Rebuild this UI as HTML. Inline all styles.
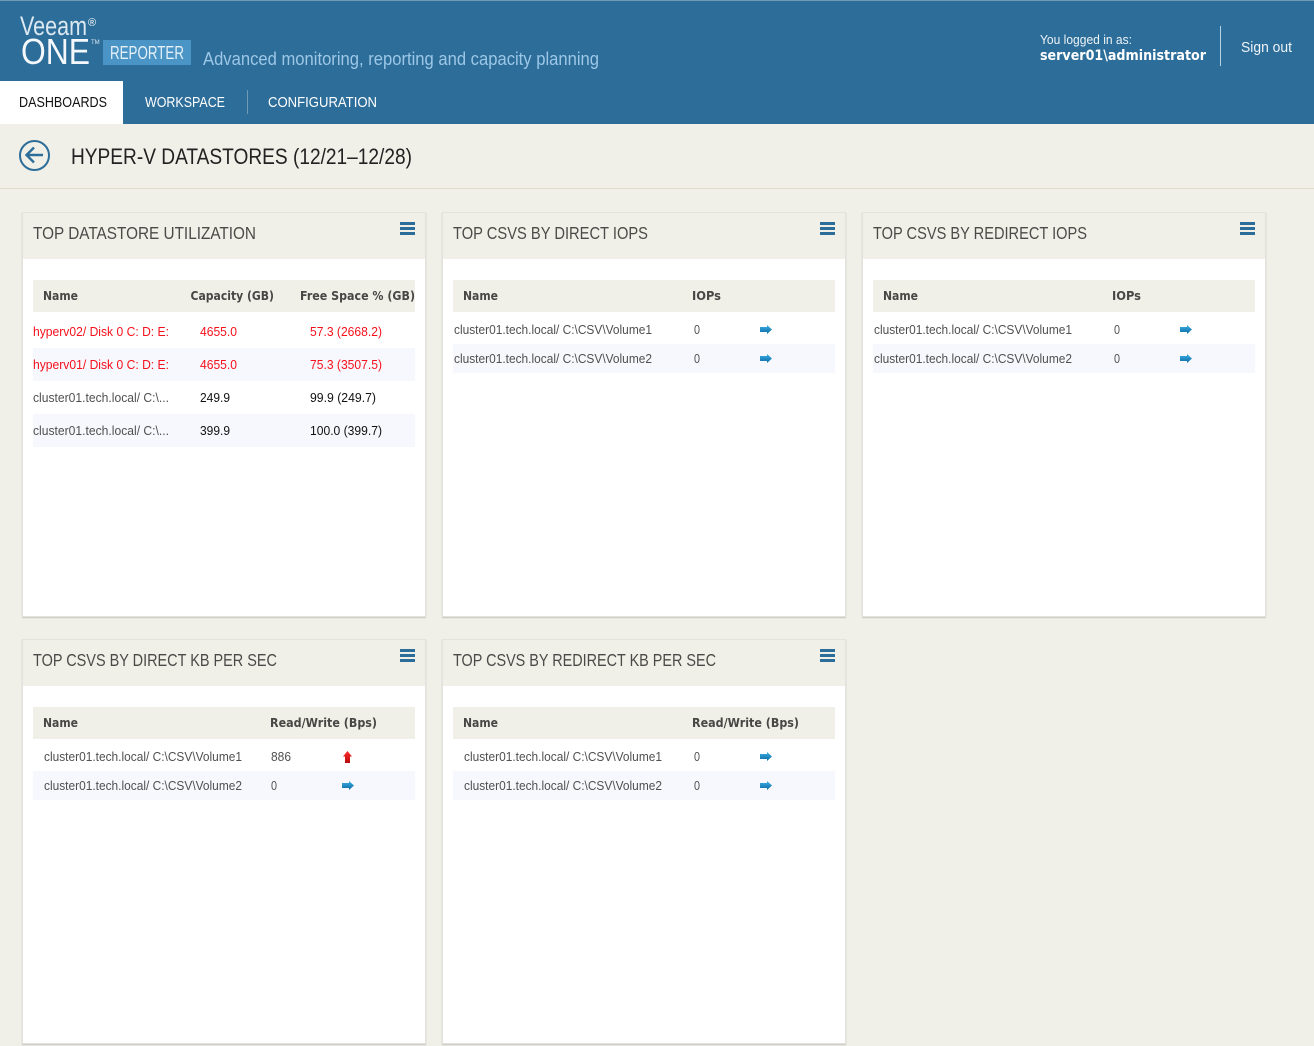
<!DOCTYPE html>
<html lang="en">
<head>
<meta charset="utf-8">
<title>Hyper-V Datastores</title>
<style>
html,body{margin:0;padding:0;background:#f1f0e8;width:1314px;height:1046px;overflow:hidden}
svg{display:block;position:absolute;left:0;top:0}
text{font-family:"Liberation Sans",Arial,sans-serif;white-space:pre}
.t{font-size:13px;fill:#505050}
.k{font-size:13px;fill:#111}
.r{font-size:13px;fill:#f5101c}
.h{font-size:12px;font-weight:bold;fill:#474745;font-family:"DejaVu Sans",sans-serif}
.p{font-size:17.5px;fill:#4a4a48}
.n{font-size:14.5px;fill:#fff}
</style>
</head>
<body>
<svg width="1314" height="1046" viewBox="0 0 1314 1046" xmlns="http://www.w3.org/2000/svg">
<defs>
<linearGradient id="bg" x1="0" y1="0" x2="0" y2="1"><stop offset="0" stop-color="#3db0e6"/><stop offset="1" stop-color="#0b6aa2"/></linearGradient>
<linearGradient id="rg" x1="0" y1="0" x2="0" y2="1"><stop offset="0" stop-color="#ff2a2a"/><stop offset="1" stop-color="#b80c0c"/></linearGradient>
<g id="ba"><path d="M0 2H7V0L12 4.500 7 9V7H0Z" fill="url(#bg)"/></g>
<g id="ra"><path d="M4.500 0L9 5.500H7V12H2V5.500H0Z" fill="url(#rg)"/></g>
<g id="m" fill="#2d6d99"><rect width="15" height="3"/><rect y="5" width="15" height="3"/><rect y="10" width="15" height="3"/></g>
<filter id="s" x="-2%" y="-2%" width="104%" height="104%"><feDropShadow dx="0" dy="1" stdDeviation=".6" flood-color="#000" flood-opacity=".18"/></filter>
</defs>

<rect width="1314" height="1046" fill="#f1f0e8"/>
<!-- header -->
<rect width="1314" height="124" fill="#2d6d99"/>
<rect width="1314" height="1" fill="#6f9bb9"/>
<text x="20" y="35" font-size="27" fill="#dce9f2" textLength="67" lengthAdjust="spacingAndGlyphs">Veeam</text>
<text x="88" y="26" font-size="11" fill="#fff">®</text>
<text x="21" y="64" font-size="36" fill="#f4f8fb" textLength="69" lengthAdjust="spacingAndGlyphs">ONE</text>
<text x="91" y="44" font-size="6" fill="#dbe8f1">TM</text>
<rect x="103" y="40" width="88" height="25" fill="#4a94c6"/>
<text x="110" y="59" font-size="18" fill="#e6f1f8" textLength="74" lengthAdjust="spacingAndGlyphs">REPORTER</text>
<text x="203" y="65" font-size="18.500" fill="#9cc7e6" textLength="396" lengthAdjust="spacingAndGlyphs">Advanced monitoring, reporting and capacity planning</text>
<rect x="0" y="81" width="123" height="43" fill="#fff"/>
<text x="19" y="107" class="n" style="fill:#111" textLength="88" lengthAdjust="spacingAndGlyphs">DASHBOARDS</text>
<text x="145" y="107" class="n" textLength="80" lengthAdjust="spacingAndGlyphs">WORKSPACE</text>
<rect x="247" y="90" width="1" height="24" fill="#6f9bb9"/>
<text x="268" y="107" class="n" textLength="109" lengthAdjust="spacingAndGlyphs">CONFIGURATION</text>
<text x="1040" y="44" font-size="13" fill="#eef4f8" textLength="92" lengthAdjust="spacingAndGlyphs">You logged in as:</text>
<text x="1040" y="60" font-size="14" font-weight="bold" fill="#fff" style="font-family:'DejaVu Sans',sans-serif" textLength="166" lengthAdjust="spacingAndGlyphs">server01\administrator</text>
<rect x="1220" y="26" width="1" height="40" fill="#b5d3e6"/>
<text x="1241" y="52" font-size="14.500" fill="#eef4f8" textLength="51" lengthAdjust="spacingAndGlyphs">Sign out</text>

<!-- page title -->
<circle cx="34.500" cy="155.500" r="14.500" fill="none" stroke="#2d6d99" stroke-width="2"/>
<path d="M43 155H27M34 147.500L26.500 155 34 162.500" fill="none" stroke="#2d6d99" stroke-width="2.400"/>
<text x="71" y="164" font-size="22" fill="#222" textLength="341" lengthAdjust="spacingAndGlyphs">HYPER-V DATASTORES (12/21–12/28)</text>
<rect y="188" width="1314" height="1" fill="#dddccd"/>

<!-- panels -->
<g fill="#fff" stroke="#e2e2de" filter="url(#s)">
<rect x="22.500" y="212.500" width="403" height="404"/>
<rect x="442.500" y="212.500" width="403" height="404"/>
<rect x="862.500" y="212.500" width="403" height="404"/>
<rect x="22.500" y="639.500" width="403" height="404"/>
<rect x="442.500" y="639.500" width="403" height="404"/>
</g>
<g fill="#f1f0e8">
<rect x="23" y="213" width="402" height="46"/>
<rect x="443" y="213" width="402" height="46"/>
<rect x="863" y="213" width="402" height="46"/>
<rect x="23" y="640" width="402" height="46"/>
<rect x="443" y="640" width="402" height="46"/>
<rect x="33" y="280" width="382" height="32"/>
<rect x="453" y="280" width="382" height="32"/>
<rect x="873" y="280" width="382" height="32"/>
<rect x="33" y="707" width="382" height="32"/>
<rect x="453" y="707" width="382" height="32"/>
</g>
<g fill="#f7f8fd">
<rect x="33" y="348" width="382" height="33"/>
<rect x="33" y="414" width="382" height="33"/>
<rect x="453" y="344" width="382" height="29"/>
<rect x="873" y="344" width="382" height="29"/>
<rect x="33" y="771" width="382" height="29"/>
<rect x="453" y="771" width="382" height="29"/>
</g>
<use href="#m" x="400" y="222"/><use href="#m" x="820" y="222"/><use href="#m" x="1240" y="222"/>
<use href="#m" x="400" y="649"/><use href="#m" x="820" y="649"/>

<!-- titles -->
<text x="33" y="239" class="p" textLength="223" lengthAdjust="spacingAndGlyphs">TOP DATASTORE UTILIZATION</text>
<text x="453" y="239" class="p" textLength="195" lengthAdjust="spacingAndGlyphs">TOP CSVS BY DIRECT IOPS</text>
<text x="873" y="239" class="p" textLength="214" lengthAdjust="spacingAndGlyphs">TOP CSVS BY REDIRECT IOPS</text>
<text x="33" y="666" class="p" textLength="244" lengthAdjust="spacingAndGlyphs">TOP CSVS BY DIRECT KB PER SEC</text>
<text x="453" y="666" class="p" textLength="263" lengthAdjust="spacingAndGlyphs">TOP CSVS BY REDIRECT KB PER SEC</text>

<!-- panel 1 -->
<text x="43" y="300" class="h" textLength="35" lengthAdjust="spacingAndGlyphs">Name</text>
<text x="190.500" y="300" class="h" textLength="83.500" lengthAdjust="spacingAndGlyphs">Capacity (GB)</text>
<text x="300" y="300" class="h" textLength="115" lengthAdjust="spacingAndGlyphs">Free Space % (GB)</text>
<text x="33" y="336" class="r" textLength="136" lengthAdjust="spacingAndGlyphs">hyperv02/ Disk 0 C: D: E:</text>
<text x="200" y="336" class="r" textLength="37" lengthAdjust="spacingAndGlyphs">4655.0</text>
<text x="310" y="336" class="r" textLength="72" lengthAdjust="spacingAndGlyphs">57.3 (2668.2)</text>
<text x="33" y="369" class="r" textLength="136" lengthAdjust="spacingAndGlyphs">hyperv01/ Disk 0 C: D: E:</text>
<text x="200" y="369" class="r" textLength="37" lengthAdjust="spacingAndGlyphs">4655.0</text>
<text x="310" y="369" class="r" textLength="72" lengthAdjust="spacingAndGlyphs">75.3 (3507.5)</text>
<text x="33" y="402" class="t" textLength="136" lengthAdjust="spacingAndGlyphs">cluster01.tech.local/ C:\...</text>
<text x="200" y="402" class="k" textLength="30" lengthAdjust="spacingAndGlyphs">249.9</text>
<text x="310" y="402" class="k" textLength="66" lengthAdjust="spacingAndGlyphs">99.9 (249.7)</text>
<text x="33" y="435" class="t" textLength="136" lengthAdjust="spacingAndGlyphs">cluster01.tech.local/ C:\...</text>
<text x="200" y="435" class="k" textLength="30" lengthAdjust="spacingAndGlyphs">399.9</text>
<text x="310" y="435" class="k" textLength="72" lengthAdjust="spacingAndGlyphs">100.0 (399.7)</text>

<!-- panel 2 -->
<text x="463" y="300" class="h" textLength="35" lengthAdjust="spacingAndGlyphs">Name</text>
<text x="692" y="300" class="h" textLength="29" lengthAdjust="spacingAndGlyphs">IOPs</text>
<text x="454" y="334" class="t" textLength="198" lengthAdjust="spacingAndGlyphs">cluster01.tech.local/ C:\CSV\Volume1</text>
<text x="694" y="334" class="t" textLength="6" lengthAdjust="spacingAndGlyphs">0</text>
<use href="#ba" x="760" y="325"/>
<text x="454" y="363" class="t" textLength="198" lengthAdjust="spacingAndGlyphs">cluster01.tech.local/ C:\CSV\Volume2</text>
<text x="694" y="363" class="t" textLength="6" lengthAdjust="spacingAndGlyphs">0</text>
<use href="#ba" x="760" y="354"/>

<!-- panel 3 -->
<text x="883" y="300" class="h" textLength="35" lengthAdjust="spacingAndGlyphs">Name</text>
<text x="1112" y="300" class="h" textLength="29" lengthAdjust="spacingAndGlyphs">IOPs</text>
<text x="874" y="334" class="t" textLength="198" lengthAdjust="spacingAndGlyphs">cluster01.tech.local/ C:\CSV\Volume1</text>
<text x="1114" y="334" class="t" textLength="6" lengthAdjust="spacingAndGlyphs">0</text>
<use href="#ba" x="1180" y="325"/>
<text x="874" y="363" class="t" textLength="198" lengthAdjust="spacingAndGlyphs">cluster01.tech.local/ C:\CSV\Volume2</text>
<text x="1114" y="363" class="t" textLength="6" lengthAdjust="spacingAndGlyphs">0</text>
<use href="#ba" x="1180" y="354"/>

<!-- panel 4 -->
<text x="43" y="727" class="h" textLength="35" lengthAdjust="spacingAndGlyphs">Name</text>
<text x="270" y="727" class="h" textLength="107" lengthAdjust="spacingAndGlyphs">Read/Write (Bps)</text>
<text x="44" y="761" class="t" textLength="198" lengthAdjust="spacingAndGlyphs">cluster01.tech.local/ C:\CSV\Volume1</text>
<text x="271" y="761" class="t" textLength="20" lengthAdjust="spacingAndGlyphs">886</text>
<use href="#ra" x="343" y="751"/>
<text x="44" y="790" class="t" textLength="198" lengthAdjust="spacingAndGlyphs">cluster01.tech.local/ C:\CSV\Volume2</text>
<text x="271" y="790" class="t" textLength="6" lengthAdjust="spacingAndGlyphs">0</text>
<use href="#ba" x="342" y="781"/>

<!-- panel 5 -->
<text x="463" y="727" class="h" textLength="35" lengthAdjust="spacingAndGlyphs">Name</text>
<text x="692" y="727" class="h" textLength="107" lengthAdjust="spacingAndGlyphs">Read/Write (Bps)</text>
<text x="464" y="761" class="t" textLength="198" lengthAdjust="spacingAndGlyphs">cluster01.tech.local/ C:\CSV\Volume1</text>
<text x="694" y="761" class="t" textLength="6" lengthAdjust="spacingAndGlyphs">0</text>
<use href="#ba" x="760" y="752"/>
<text x="464" y="790" class="t" textLength="198" lengthAdjust="spacingAndGlyphs">cluster01.tech.local/ C:\CSV\Volume2</text>
<text x="694" y="790" class="t" textLength="6" lengthAdjust="spacingAndGlyphs">0</text>
<use href="#ba" x="760" y="781"/>
</svg>
</body>
</html>
